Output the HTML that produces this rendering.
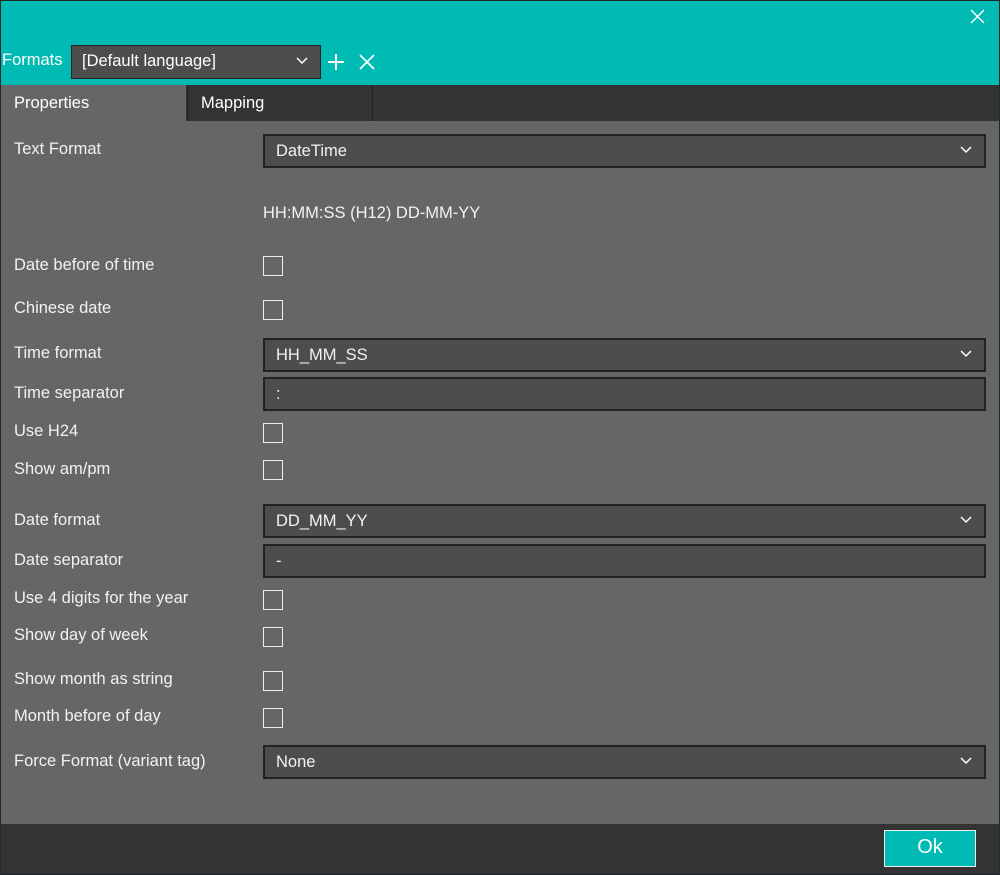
<!DOCTYPE html>
<html><head><meta charset="utf-8"><style>
*{margin:0;padding:0;box-sizing:border-box}
body{width:1000px;height:875px;overflow:hidden;background:#1e2a2a;font-family:"Liberation Sans",sans-serif;color:#fff;position:relative}
.a{position:absolute}
.lbl{position:absolute;left:14px;font-size:16.5px;line-height:20px;color:#f2f2f2}
.dd{position:absolute;left:263px;width:723px;height:34px;background:#4d4d4d;border:2px solid #222;font-size:16.5px;line-height:30px;padding-left:11px;color:#f2f2f2}
.dd svg{position:absolute;right:12px;top:10px}
.cb{position:absolute;left:263px;width:20px;height:20px;border:1.5px solid #eee}
</style></head><body>
<div class="a" style="left:1px;top:1px;width:998px;height:84px;background:#00bab4"></div>
<svg class="a" style="left:970px;top:9px" width="15" height="15"><path d="M1 1L14 14M14 1L1 14" stroke="#fff" stroke-width="1.5"/></svg>
<div class="a" style="left:2px;top:50px;font-size:16.5px;line-height:20px">Formats</div>
<div class="a" style="left:71px;top:45px;width:250px;height:34px;background:#4d4d4d;border:1.5px solid #222;font-size:16.5px;line-height:30px;padding-left:10px">[Default language]<svg class="a" style="right:12px;top:11px" width="12" height="8"><path d="M1 1L6 6L11 1" stroke="#fff" stroke-width="1.5" fill="none"/></svg></div>
<svg class="a" style="left:327px;top:53px" width="18" height="18"><path d="M9 1V17M1 9H17" stroke="#fff" stroke-width="2"/></svg>
<svg class="a" style="left:359px;top:54px" width="16" height="16"><path d="M1 1L15 15M15 1L1 15" stroke="#fff" stroke-width="1.7"/></svg>
<div class="a" style="left:1px;top:85px;width:998px;height:36px;background:#333"></div>
<div class="a" style="left:1px;top:85px;width:185px;height:36px;background:#666;font-size:16.5px;line-height:36px;padding-left:13px">Properties</div>
<div class="a" style="left:187px;top:85px;width:186px;height:36px;background:#333;border-left:1px solid #222;border-right:1px solid #222;font-size:16.5px;line-height:36px;padding-left:13px">Mapping</div>
<div class="a" style="left:1px;top:121px;width:998px;height:703px;background:#666"></div>
<div class="a" style="left:1px;top:824px;width:998px;height:50px;background:#333"></div>
<div class="a" style="left:884px;top:830px;width:92px;height:37px;background:#00bab4;border:1.5px solid #eee;font-size:20px;line-height:33px;text-align:center">Ok</div>

<div class="lbl" style="top:139px">Text Format</div>
<div class="dd" style="top:134px">DateTime<svg width="12" height="8"><path d="M1 1L6 6L11 1" stroke="#fff" stroke-width="1.5" fill="none"/></svg></div>
<div class="lbl" style="left:263px;top:203px">HH:MM:SS (H12) DD-MM-YY</div>
<div class="lbl" style="top:255px">Date before of time</div><div class="cb" style="top:256px"></div>
<div class="lbl" style="top:298px">Chinese date</div><div class="cb" style="top:300px"></div>
<div class="lbl" style="top:343px">Time format</div>
<div class="dd" style="top:338px">HH_MM_SS<svg width="12" height="8"><path d="M1 1L6 6L11 1" stroke="#fff" stroke-width="1.5" fill="none"/></svg></div>
<div class="lbl" style="top:383px">Time separator</div>
<div class="dd" style="top:377px">:</div>
<div class="lbl" style="top:421px">Use H24</div><div class="cb" style="top:423px"></div>
<div class="lbl" style="top:459px">Show am/pm</div><div class="cb" style="top:460px"></div>
<div class="lbl" style="top:510px">Date format</div>
<div class="dd" style="top:504px">DD_MM_YY<svg width="12" height="8"><path d="M1 1L6 6L11 1" stroke="#fff" stroke-width="1.5" fill="none"/></svg></div>
<div class="lbl" style="top:550px">Date separator</div>
<div class="dd" style="top:544px">-</div>
<div class="lbl" style="top:588px">Use 4 digits for the year</div><div class="cb" style="top:590px"></div>
<div class="lbl" style="top:625px">Show day of week</div><div class="cb" style="top:627px"></div>
<div class="lbl" style="top:669px">Show month as string</div><div class="cb" style="top:671px"></div>
<div class="lbl" style="top:706px">Month before of day</div><div class="cb" style="top:708px"></div>
<div class="lbl" style="top:751px">Force Format (variant tag)</div>
<div class="dd" style="top:745px">None<svg width="12" height="8"><path d="M1 1L6 6L11 1" stroke="#fff" stroke-width="1.5" fill="none"/></svg></div>
</body></html>
